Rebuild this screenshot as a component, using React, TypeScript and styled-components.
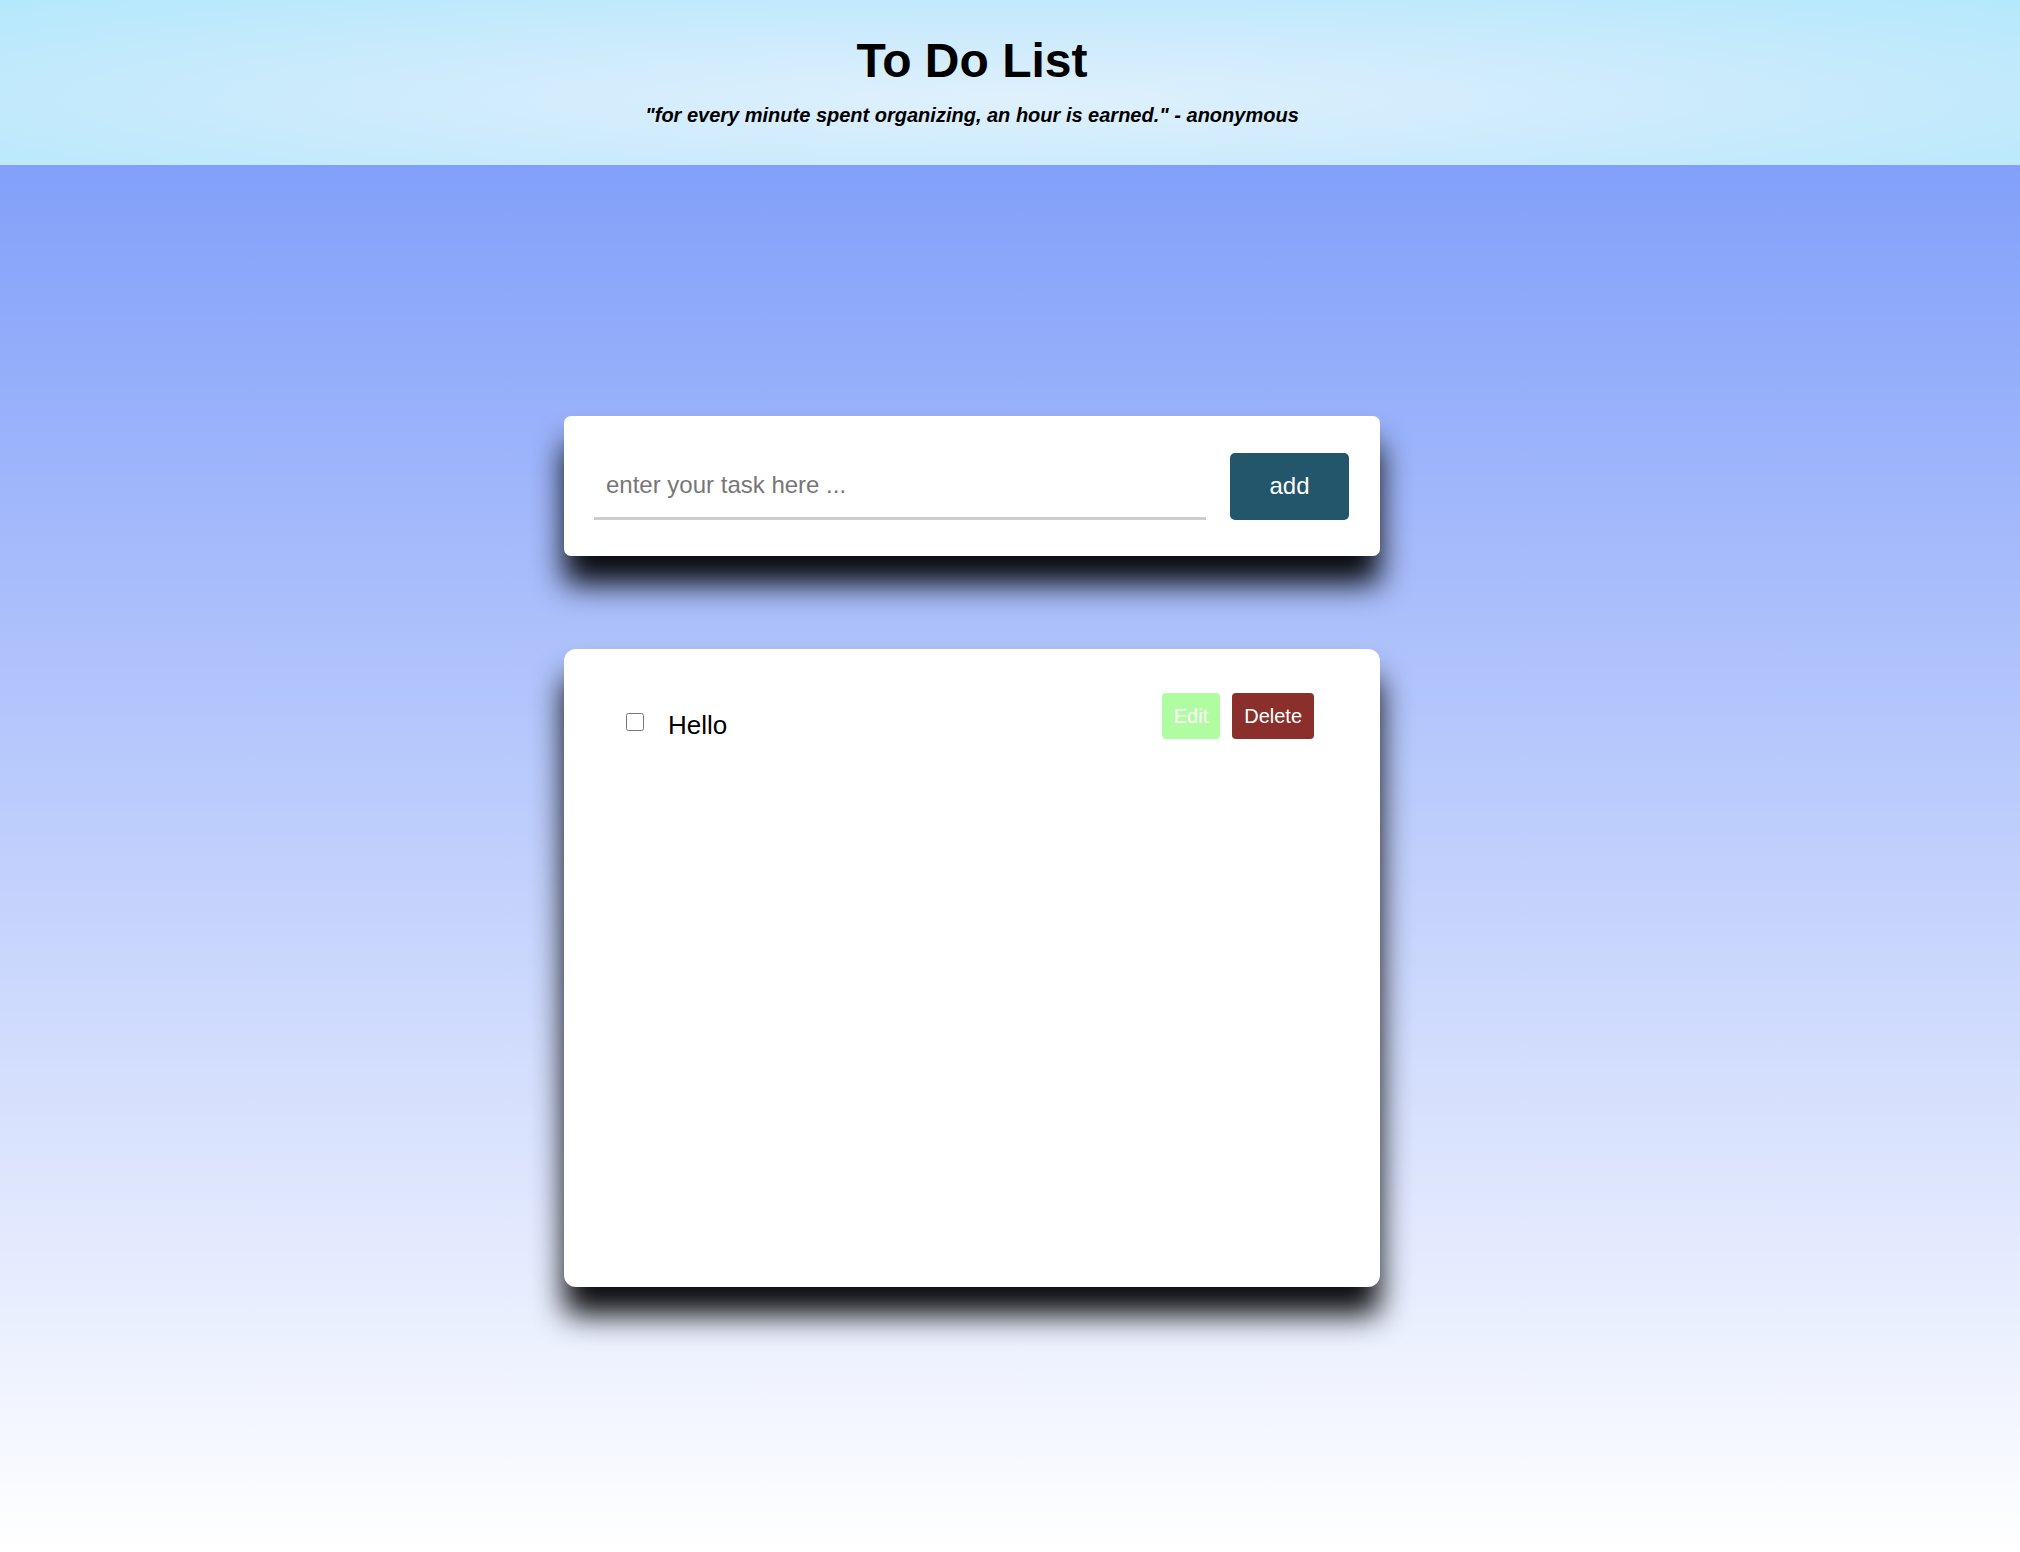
import { useState } from 'react';
import styled, { createGlobalStyle } from 'styled-components';

const GlobalStyle = createGlobalStyle`
  html, body {
    margin: 0;
    padding: 0;
  }
  body {
    font-family: "Liberation Sans", Arial, Helvetica, sans-serif;
    background: #fff;
  }
`

const Page = styled.div`
  min-height: 100vh;
  display: flex;
  flex-direction: column;
`

// content is centred a bit left of the window centre in the original
const Header = styled.header`
  height: 165px;
  box-sizing: border-box;
  padding: 34px 76px 0 0;
  display: flex;
  flex-direction: column;
  align-items: center;
  background: radial-gradient(ellipse at 50% 60%, #dff0fc 0%, #cdebfc 45%, #b4e8fc 100%);
`

const Title = styled.h1`
  margin: 0;
  font-size: 48px;
  line-height: 54px;
  font-weight: 700;
  color: #000;
`

const Quote = styled.p`
  margin: 16px 0 0;
  font-size: 20px;
  font-style: italic;
  font-weight: 700;
  color: #000;
`

const Main = styled.main`
  flex: 1;
  display: flex;
  flex-direction: column;
  align-items: center;
  padding: 251px 76px 0 0;
  gap: 93px;
  background: linear-gradient(180deg, #82a0f9 0%, #ffffff 100%);
`

const Card = styled.section<{ tall?: boolean }>`
  width: 816px;
  box-sizing: border-box;
  background: #fff;
  border-radius: ${p => (p.tall ? '12px' : '7px')};
  height: ${p => (p.tall ? '638px' : '140px')};
  box-shadow: 0 28px 30px rgba(0, 0, 0, 0.95);
`

const Form = styled.form`
  display: flex;
  align-items: center;
  gap: 24px;
  height: 100%;
  padding: 0 31px 0 30px;
`

const TaskInput = styled.input`
  flex: 1;
  height: 67px;
  box-sizing: border-box;
  border: none;
  border-bottom: 3px solid #cccccc;
  outline: none;
  padding: 0 12px;
  font-family: inherit;
  font-size: 24px;
  color: #222;
  background: transparent;
  &::placeholder {
    color: #777;
  }
`

const AddButton = styled.button`
  width: 119px;
  height: 67px;
  border: none;
  border-radius: 5px;
  background: #23566a;
  color: #fff;
  font-family: inherit;
  font-size: 24px;
`

const List = styled.ul`
  list-style: none;
  margin: 0;
  padding: 44px 66px 0 62px;
`

const Row = styled.li`
  display: flex;
  align-items: flex-start;
`

const Check = styled.input`
  width: 18px;
  height: 18px;
  margin: 20px 24px 0 0;
`

const Label = styled.span`
  flex: 1;
  font-size: 26px;
  line-height: 30px;
  margin-top: 17px;
  color: #000;
`

const Actions = styled.div`
  display: flex;
  gap: 12px;
`

const SmallButton = styled.button<{ tone: 'edit' | 'delete' }>`
  height: 46px;
  padding: 0 12px;
  border: none;
  border-radius: 4px;
  font-family: inherit;
  font-size: 20px;
  color: #fff;
  background: ${p => (p.tone === 'edit' ? '#b0fca1' : '#8b2f2c')};
`

export default function App() {
  const [text, setText] = useState('');
  const [todos] = useState([{ id: 1, title: 'Hello', done: false }]);

  return (
    <Page>
      <GlobalStyle />
      <Header>
        <Title>To Do List</Title>
        <Quote>"for every minute spent organizing, an hour is earned." - anonymous</Quote>
      </Header>
      <Main>
        <Card>
          <Form onSubmit={e => e.preventDefault()}>
            <TaskInput
              placeholder="enter your task here ..."
              value={text}
              onChange={e => setText(e.target.value)}
            />
            <AddButton type="submit">add</AddButton>
          </Form>
        </Card>
        <Card tall>
          <List>
            {todos.map(todo => (
              <Row key={todo.id}>
                <Check type="checkbox" defaultChecked={todo.done} />
                <Label>{todo.title}</Label>
                <Actions>
                  <SmallButton tone="edit">Edit</SmallButton>
                  <SmallButton tone="delete">Delete</SmallButton>
                </Actions>
              </Row>
            ))}
          </List>
        </Card>
      </Main>
    </Page>
  );
}
